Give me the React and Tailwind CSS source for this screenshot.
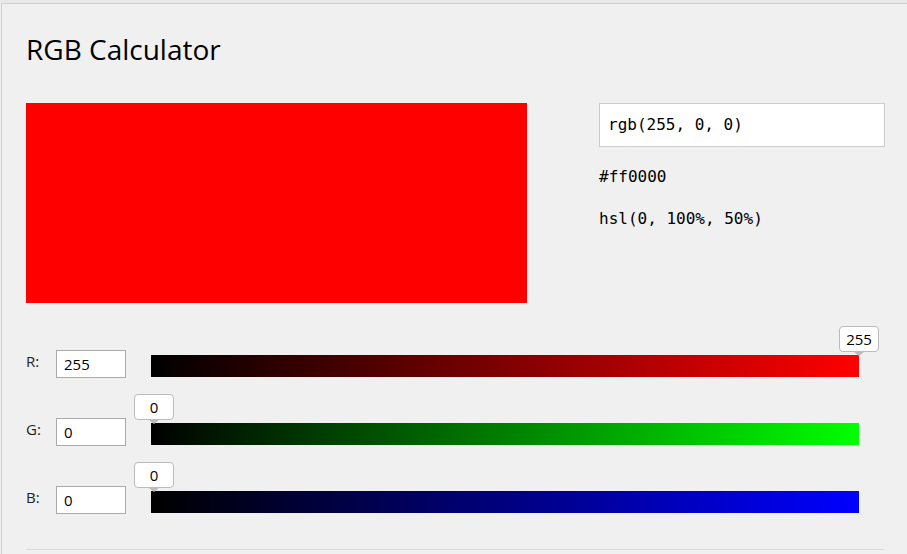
import React from "react";

const sans = { fontFamily: '"Open Sans", "Noto Sans", sans-serif' };

function Row({ label, value, gradient, pos }) {
  return (
    <div className="flex items-start">
      <div className="w-[30px] h-[28px] flex items-center text-[15px] text-[#222] -mt-[3px]" style={sans}>
        {label}
      </div>
      <div className="w-[70px] h-[28px] border border-[#aaa] bg-white flex items-center pl-[7px] text-[15px] text-black" style={sans}>
        {value}
      </div>
      <div className={`relative ml-[25px] mt-[5px] w-[708px] h-[22px] ${gradient}`}>
        <div
          className="absolute top-[-29px] w-[40px] h-[26px] bg-white border border-[#bbb] rounded-[4px] flex items-center justify-center text-[15px] text-black"
          style={{ ...sans, left: pos }}
        >
          {value}
          <div className="absolute left-1/2 -translate-x-1/2 top-[25px] w-0 h-0 border-l-[5px] border-r-[5px] border-t-[4px] border-l-transparent border-r-transparent border-t-[#bbb]" />
        </div>
      </div>
    </div>
  );
}

export default function App() {
  return (
    <div className="w-[907px] h-[554px] bg-[#f0f0f0] overflow-hidden">
      <div className="h-[3px] bg-[#e8e8e8]" />
      <div className="ml-[1px] border-t border-l border-[#cfcfcf] h-[551px] pl-[24px] pr-[22px]">
        <div className="pt-[27px] h-[66px]">
          <h1 className="text-[28px] leading-[36px] text-black" style={sans}>
            RGB Calculator
          </h1>
        </div>
        <div className="flex mt-[33px]">
          <div className="w-[501px] h-[200px] bg-[#ff0000]" />
          <div className="ml-[72px] w-[286px]" style={{ fontFamily: '"DejaVu Sans Mono", monospace' }}>
            <div className="h-[44px] border border-[#ccc] bg-white flex items-center pl-[8px] text-[16px] text-black">
              rgb(255, 0, 0)
            </div>
            <div className="mt-[18px] text-[16px] leading-[24px] text-black">#ff0000</div>
            <div className="mt-[18px] text-[16px] leading-[24px] text-black">hsl(0, 100%, 50%)</div>
          </div>
        </div>
        <div className="mt-[47px] flex flex-col gap-[40px]">
          <Row label="R:" value="255" gradient="bg-linear-to-r/srgb from-black to-[#ff0000]" pos={688} />
          <Row label="G:" value="0" gradient="bg-linear-to-r/srgb from-black to-[#00ff00]" pos={-17} />
          <Row label="B:" value="0" gradient="bg-linear-to-r/srgb from-black to-[#0000ff]" pos={-17} />
        </div>
        <div className="mt-[35px] w-[858px] h-[1px] bg-[#dcdcdc]" />
      </div>
    </div>
  );
}
